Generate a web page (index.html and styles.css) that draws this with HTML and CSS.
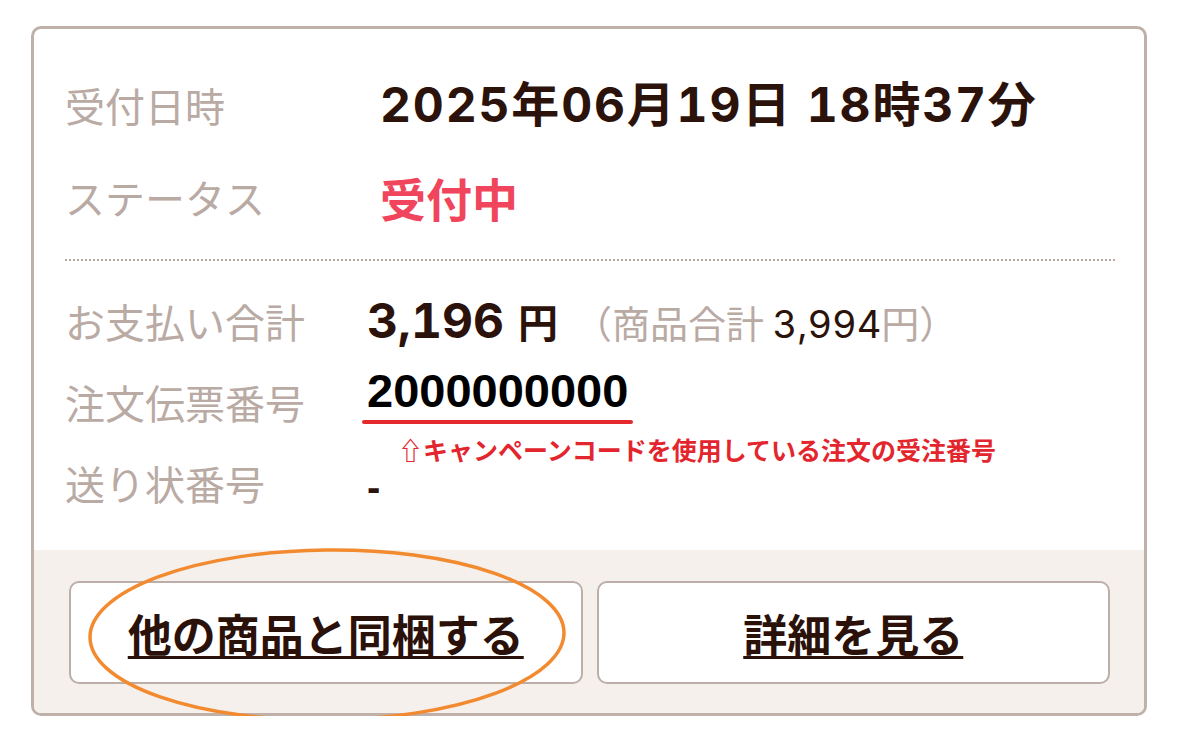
FILE: index.html
```html
<!DOCTYPE html>
<html lang="ja">
<head>
<meta charset="utf-8">
<title>注文詳細</title>
<link rel="stylesheet" href="styles.css">
</head>
<body>
<div class="page">
  <div class="card">
    <div class="card-body">
      <dl class="info info-top">
        <div class="row">
          <dt>受付日時</dt>
          <dd class="val date">2025年06月19日 18時37分</dd>
        </div>
        <div class="row">
          <dt>ステータス</dt>
          <dd class="val status">受付中</dd>
        </div>
      </dl>
      <hr class="divider">
      <dl class="info info-bottom">
        <div class="row">
          <dt>お支払い合計</dt>
          <dd class="val price"><span class="amount">3,196</span><span class="yen">円</span><span class="subtotal">（商品合計 <span class="num">3,994</span>円）</span></dd>
        </div>
        <div class="row">
          <dt>注文伝票番号</dt>
          <dd class="val order">
            <span class="order-no">2000000000</span>
            <span class="mark-line"></span>
            <span class="note">⇧キャンペーンコードを使用している注文の受注番号</span>
          </dd>
        </div>
        <div class="row">
          <dt>送り状番号</dt>
          <dd class="val slip">-</dd>
        </div>
      </dl>
    </div>
    <div class="card-foot">
      <a class="btn" href="#">他の商品と同梱する</a>
      <a class="btn" href="#">詳細を見る</a>
    </div>
    <svg class="circle-mark" width="500" height="190" viewBox="0 0 500 190">
      <ellipse cx="243" cy="92" rx="237" ry="85" fill="none" stroke="#f28a30" stroke-width="3.5" transform="rotate(-0.6 243 92)"/>
    </svg>
  </div>
</div>
</body>
</html>
```

FILE: styles.css
```css
html, body {
  margin: 0;
  background: #ffffff;
}

body {
  font-family: "Noto Sans CJK JP", sans-serif;
  color: #2b120b;
}

.page {
  padding: 26px 0 0 31px;
}

.card {
  position: relative;
  width: 1116px;
  height: 690px;
  box-sizing: border-box;
  border: 3px solid #bfb0a9;
  border-radius: 10px;
  background: #ffffff;
}

.card-body {
  padding: 30px 29px 27px 31px;
}

.info {
  margin: 0;
}

.row {
  display: grid;
  grid-template-columns: 315px 1fr;
  align-items: center;
  height: 92px;
}

.info-bottom .row {
  grid-template-columns: 302px 1fr;
  height: 81px;
}

dt {
  font-size: 40px;
  line-height: 1;
  color: #b9aaa4;
  white-space: nowrap;
}

dd {
  margin: 0;
}

.val {
  line-height: 1;
  white-space: nowrap;
}

.date {
  font-family: Inter, "Noto Sans CJK JP", sans-serif;
  font-variant-numeric: tabular-nums;
  font-weight: 700;
  font-size: 48px;
  letter-spacing: 1.8px;
  color: #2b120b;
}

.status {
  font-weight: 700;
  font-size: 46px;
  color: #f0455c;
}

.divider {
  border: 0;
  border-top: 2px dotted #b5a8a2;
  height: 0;
  margin: 16px 0 19px;
}

.price {
  display: flex;
  align-items: baseline;
}

.amount {
  font-family: Inter, "Noto Sans CJK JP", sans-serif;
  font-variant-numeric: tabular-nums;
  font-weight: 700;
  font-size: 48px;
  color: #2b120b;
}

.yen {
  font-weight: 700;
  font-size: 40px;
  margin-left: 14px;
  color: #2b120b;
}

.subtotal {
  font-size: 38px;
  color: #b9aaa4;
  margin-left: 16px;
}

.subtotal .num {
  font-family: Inter, "Noto Sans CJK JP", sans-serif;
  font-variant-numeric: tabular-nums;
  color: #2b120b;
}

.order {
  position: relative;
}

.order-no {
  display: inline-block;
  font-family: "Liberation Sans", "Noto Sans CJK JP", sans-serif;
  font-weight: 700;
  font-size: 47px;
  color: #000000;
  margin-bottom: 22px;
}

.mark-line {
  position: absolute;
  left: -5px;
  top: 53px;
  width: 271px;
  height: 4px;
  border-radius: 2px;
  background: #e52a2f;
}

.note {
  position: absolute;
  left: 31px;
  top: 69px;
  font-family: "Noto Sans CJK JP", "DejaVu Sans", sans-serif;
  font-weight: 700;
  font-size: 25px;
  line-height: 26px;
  color: #e3262e;
}

.slip {
  font-family: "Liberation Sans", sans-serif;
  font-weight: 700;
  font-size: 40px;
  color: #2b120b;
  padding-top: 8px;
}

.card-foot {
  display: grid;
  grid-template-columns: 1fr 1fr;
  gap: 14px;
  padding: 31px 34px 29px 35px;
  background: #f6f0ed;
  border-radius: 0 0 7px 7px;
}

.btn {
  display: flex;
  align-items: center;
  justify-content: center;
  height: 103px;
  box-sizing: border-box;
  border: 2px solid #bdaea8;
  border-radius: 10px;
  background: #ffffff;
  font-size: 44px;
  font-weight: 700;
  color: #2a1109;
  text-decoration: underline;
  text-decoration-thickness: 3px;
  text-underline-offset: 4px;
}

.circle-mark {
  position: absolute;
  left: 50px;
  top: 514px;
  pointer-events: none;
}
```
